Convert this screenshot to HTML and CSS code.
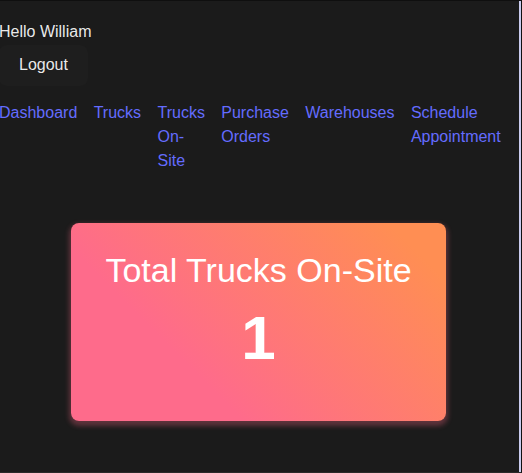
FILE: index.html
```html
<!DOCTYPE html>
<html lang="en">
<head>
<meta charset="utf-8">
<title>Dashboard</title>
<link rel="stylesheet" href="styles.css">
</head>
<body>
<div class="page">
  <header class="header">
    <p class="greeting">Hello William</p>
    <button class="logout" type="button">Logout</button>
  </header>
  <nav class="nav">
    <a href="#">Dashboard</a>
    <a href="#">Trucks</a>
    <a href="#">Trucks On-Site</a>
    <a href="#">Purchase Orders</a>
    <a href="#">Warehouses</a>
    <a href="#">Schedule Appointment</a>
  </nav>
  <main class="dashboard">
    <div class="card">
      <h2 class="card-title">Total Trucks On-Site</h2>
      <p class="card-value">1</p>
    </div>
  </main>
</div>
<div class="frame"></div>
</body>
</html>
```
FILE: styles.css
```css
html, body {
  margin: 0;
  background: #1b1b1b;
}
body {
  font-family: "Liberation Sans", Arial, sans-serif;
  font-size: 16px;
  line-height: 24px;
  color: rgba(255, 255, 255, 0.92);
  height: 473px;
  overflow: hidden;
}
.page {
  margin-left: -1px;
  width: 519px;
  padding-top: 21px;
  box-sizing: border-box;
}
.greeting {
  margin: 0;
  line-height: 22px;
}
.logout {
  display: block;
  margin-top: 2px;
  font-family: inherit;
  font-size: 16px;
  line-height: 18px;
  color: rgba(255, 255, 255, 0.92);
  background: #1e1e1e;
  border: 1px solid transparent;
  border-radius: 8px;
  padding: 10px 19px 11px;
  cursor: pointer;
}
.nav {
  display: flex;
  align-items: flex-start;
  gap: 16.4px;
  margin-top: 15px;
}
.nav a {
  width: min-content;
  color: #646cff;
  text-decoration: none;
  line-height: 24px;
}
.dashboard {
  display: flex;
  justify-content: center;
  margin-top: 50px;
}
.card {
  width: 375px;
  height: 198px;
  box-sizing: border-box;
  padding-top: 28px;
  border-radius: 8px;
  background: linear-gradient(45deg, #fe6b8b 30%, #ff8e53 90%);
  box-shadow: 0 3px 5px 2px rgba(255, 105, 135, 0.3);
  text-align: center;
  color: #fff;
}
.card-title {
  margin: 0;
  font-size: 34px;
  line-height: 38px;
  font-weight: 400;
}
.card-value {
  margin: 12px 0 0;
  font-size: 62px;
  line-height: 74px;
  font-weight: 700;
}
.frame {
  position: fixed;
  top: 0;
  left: 0;
  width: 522px;
  height: 473px;
  box-sizing: border-box;
  border-top: 1px solid #0f0f0f;
  border-right: 1px solid #111;
  border-bottom: 1px solid #2a2a2a;
  pointer-events: none;
}
.frame::after {
  content: "";
  position: absolute;
  top: 0;
  bottom: 0;
  right: 0;
  width: 2px;
  background: #c9cbee;
}
```
